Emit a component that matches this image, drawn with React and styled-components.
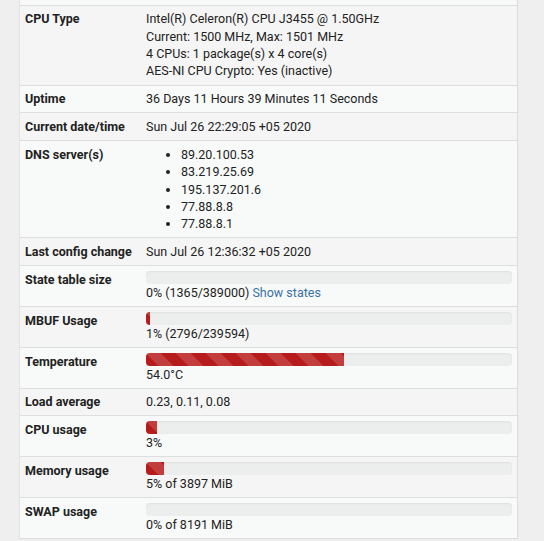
import React from 'react';
import styled, { createGlobalStyle } from 'styled-components';

const GlobalStyle = createGlobalStyle`
  body {
    margin: 0;
    background: #efefef;
    font-family: Roboto, 'Liberation Sans', sans-serif;
    font-size: 12.5px;
    line-height: 17.4px;
    color: #222222;
  }
`;

const Panel = styled.div`
  margin-left: 19px;
  width: 497px;
  border-left: 1px solid #e2e2e2;
  border-right: 1px solid #dcdcdc;
  background: #f8faf9;
`;

const Table = styled.table`
  width: 100%;
  border-collapse: collapse;
`;

const Row = styled.tr`
  background: ${(p) => (p.odd ? '#f5f5f5' : '#f8faf9')};
  border-bottom: 1px solid #dedede;
`;

const TopRow = styled.tr`
  height: 5px;
  background: #f8faf9;
  border-bottom: 1px solid #dedede;
`;

const Label = styled.th`
  width: 111px;
  padding: 4.7px 5px 4.7px 5px;
  text-align: left;
  vertical-align: top;
  font-weight: 700;
  white-space: nowrap;
`;

const Value = styled.td`
  padding: 4.7px 5px;
  vertical-align: top;
`;

const DnsList = styled.ul`
  margin: 0;
  padding-left: 35px;
`;

const Bar = styled.div`
  height: 13px;
  border-radius: 4px;
  background: #eceeed;
  box-shadow: inset 0 1px 2px rgba(0, 0, 0, 0.06);
  overflow: hidden;
`;

const Fill = styled.div`
  height: 100%;
  background-color: #b71c1c;
  background-image: linear-gradient(
    45deg,
    rgba(255, 255, 255, 0.15) 25%,
    transparent 25%,
    transparent 50%,
    rgba(255, 255, 255, 0.15) 50%,
    rgba(255, 255, 255, 0.15) 75%,
    transparent 75%,
    transparent
  );
  background-size: 30px 30px;
`;

const Link = styled.a`
  color: #3b6fa6;
  text-decoration: none;
`;

const Progress = ({ pct, children }) => (
  <>
    <Bar>{pct > 0 && <Fill style={{ width: `${pct}%` }} />}</Bar>
    {children}
  </>
);

const dns = ['89.20.100.53', '83.219.25.69', '195.137.201.6', '77.88.8.8', '77.88.8.1'];

const App = () => (
  <>
    <GlobalStyle />
    <Panel>
      <Table>
        <tbody>
          <TopRow>
            <td />
            <td />
          </TopRow>
          <Row odd>
            <Label>CPU Type</Label>
            <Value>
              Intel(R) Celeron(R) CPU J3455 @ 1.50GHz
              <br />
              Current: 1500 MHz, Max: 1501 MHz
              <br />
              4 CPUs: 1 package(s) x 4 core(s)
              <br />
              AES-NI CPU Crypto: Yes (inactive)
            </Value>
          </Row>
          <Row>
            <Label>Uptime</Label>
            <Value>36 Days 11 Hours 39 Minutes 11 Seconds</Value>
          </Row>
          <Row odd>
            <Label>Current date/time</Label>
            <Value>Sun Jul 26 22:29:05 +05 2020</Value>
          </Row>
          <Row>
            <Label>DNS server(s)</Label>
            <Value>
              <DnsList>
                {dns.map((d) => (
                  <li key={d}>{d}</li>
                ))}
              </DnsList>
            </Value>
          </Row>
          <Row odd>
            <Label>Last config change</Label>
            <Value>Sun Jul 26 12:36:32 +05 2020</Value>
          </Row>
          <Row>
            <Label>State table size</Label>
            <Value>
              <Progress pct={0}>
                0% (1365/389000) <Link href="#">Show states</Link>
              </Progress>
            </Value>
          </Row>
          <Row odd>
            <Label>MBUF Usage</Label>
            <Value>
              <Progress pct={1.2}>1% (2796/239594)</Progress>
            </Value>
          </Row>
          <Row>
            <Label>Temperature</Label>
            <Value>
              <Progress pct={54}>54.0°C</Progress>
            </Value>
          </Row>
          <Row odd>
            <Label>Load average</Label>
            <Value>0.23, 0.11, 0.08</Value>
          </Row>
          <Row>
            <Label>CPU usage</Label>
            <Value>
              <Progress pct={3}>3%</Progress>
            </Value>
          </Row>
          <Row odd>
            <Label>Memory usage</Label>
            <Value>
              <Progress pct={5}>5% of 3897 MiB</Progress>
            </Value>
          </Row>
          <Row>
            <Label>SWAP usage</Label>
            <Value>
              <Progress pct={0}>0% of 8191 MiB</Progress>
            </Value>
          </Row>
        </tbody>
      </Table>
    </Panel>
  </>
);

export default App;
